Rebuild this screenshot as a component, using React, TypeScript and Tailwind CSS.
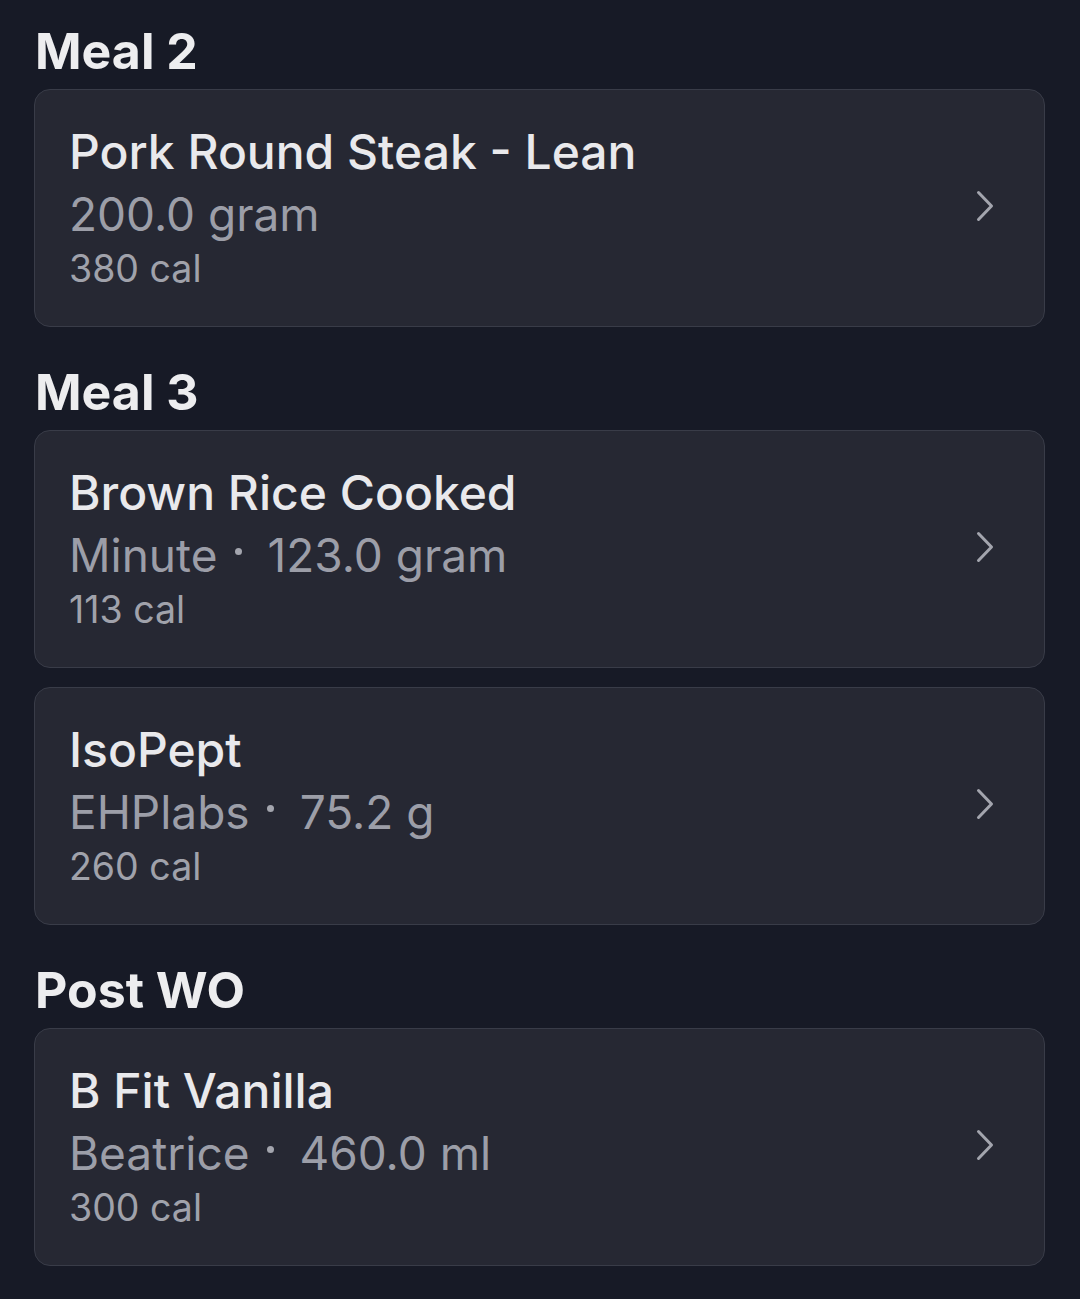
import React from "react";

interface FoodEntry {
  id: number;
  name: string;
  brand?: string;
  amount: string;
  calories: number;
}

interface MealSection {
  title: string;
  items: FoodEntry[];
}

const meals: MealSection[] = [
  {
    title: "Meal 2",
    items: [{ id: 1, name: "Pork Round Steak - Lean", amount: "200.0 gram", calories: 380 }],
  },
  {
    title: "Meal 3",
    items: [
      { id: 2, name: "Brown Rice Cooked", brand: "Minute", amount: "123.0 gram", calories: 113 },
      { id: 3, name: "IsoPept", brand: "EHPlabs", amount: "75.2 g", calories: 260 },
    ],
  },
  {
    title: "Post WO",
    items: [{ id: 4, name: "B Fit Vanilla", brand: "Beatrice", amount: "460.0 ml", calories: 300 }],
  },
];

const Chevron = () => (
  <svg width="20" height="32" viewBox="0 0 20 32" fill="none" className="shrink-0">
    <path
      d="M3.5 2.5 L16.5 16 L3.5 29.5"
      stroke="#a3a5ae"
      strokeWidth="3"
      strokeLinecap="round"
      strokeLinejoin="round"
    />
  </svg>
);

const FoodCard = ({ item }: { item: FoodEntry }) => (
  <div className="flex items-center justify-between rounded-[16px] border border-[#393c48] bg-[#262833] pl-[34px] pr-[49px] pt-[30px] pb-[34px]">
    <div className="flex flex-col">
      <div className="text-[48px] leading-[63px] font-medium text-[#e9e9ec]">{item.name}</div>
      <div className="text-[46px] leading-[63px] text-[#9c9ea8]">
        {item.brand && (
          <>
            {item.brand}
            <span className="inline-block w-[7px] h-[7px] rounded-full bg-[#a3a5ae] align-[17px] ml-[17px] mr-[26px]" />
          </>
        )}
        {item.amount}
      </div>
      <div className="text-[37.5px] leading-[46px] text-[#a0a2ab]">{item.calories} cal</div>
    </div>
    <Chevron />
  </div>
);

export default function App() {
  return (
    <div className="min-h-[1299px] w-full bg-[#171a26] pl-[34px] pr-[35px] pt-[26px] pb-[35px] font-['Inter',sans-serif]">
      {meals.map((meal, idx) => (
        <section key={meal.title} className={idx > 0 ? "mt-[40px]" : ""}>
          <h2 className="pl-[1px] text-[50px] leading-[50px] font-bold text-[#ededef] mb-[13px]">{meal.title}</h2>
          <div className="flex flex-col gap-[19px]">
            {meal.items.map((item) => (
              <FoodCard key={item.id} item={item} />
            ))}
          </div>
        </section>
      ))}
    </div>
  );
}
